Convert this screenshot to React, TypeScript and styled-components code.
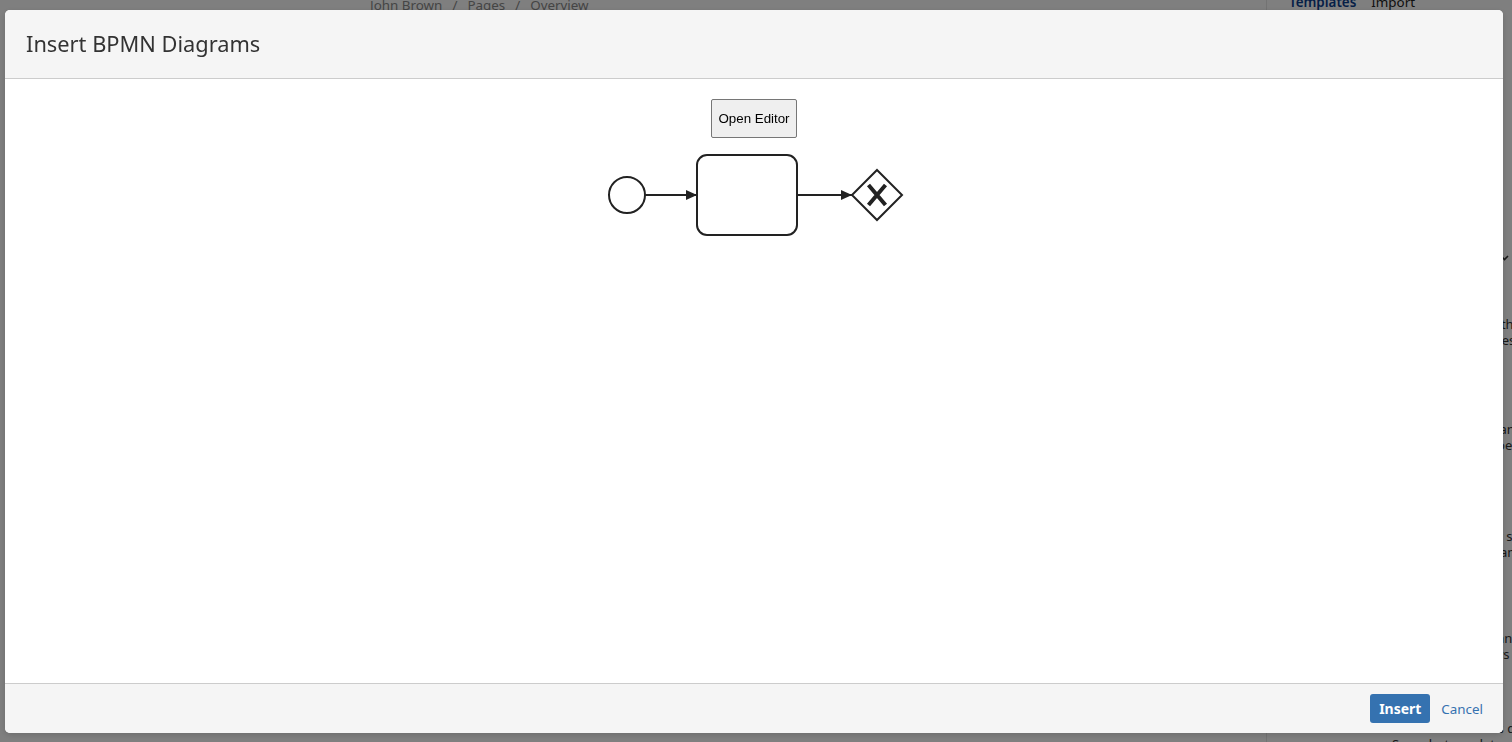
import React from "react";
import styled, { createGlobalStyle } from "styled-components";

const GlobalStyle = createGlobalStyle`
  html, body {
    margin: 0;
    padding: 0;
    height: 100%;
    overflow: hidden;
  }
  body {
    font-family: "Noto Sans", "Open Sans", sans-serif;
    background: #ffffff;
  }
`;

const Page = styled.div`
  display: flex;
  width: 100vw;
  height: 100vh;
  overflow: hidden;
  color: #42526e;
`;

const Main = styled.div`
  flex: 1;
  padding: 0 0 0 370px;
`;

const Breadcrumbs = styled.div`
  display: flex;
  gap: 10px;
  margin-top: -4px;
  font-size: 13.4px;
  color: #8a8a8a;
`;

const Toolbar = styled.div`
  display: flex;
  justify-content: flex-end;
  padding-right: 150px;
  margin-top: -12px;
  font-size: 14px;
  color: #222;
`;

const Sidebar = styled.aside`
  width: 245px;
  border-left: 1px solid #e6e6e6;
  display: flex;
  flex-direction: column;
  overflow: hidden;
`;

const Tabs = styled.div`
  display: flex;
  gap: 15px;
  padding-left: 22px;
  margin-top: -7px;
  height: 18px;
  font-size: 13.4px;
`;

const Tab = styled.span<{ $active?: boolean }>`
  color: ${(p) => (p.$active ? "#0b3f8f" : "#222")};
  font-weight: ${(p) => (p.$active ? 600 : 400)};
`;

const SectionToggle = styled.div`
  display: flex;
  justify-content: flex-end;
  align-items: center;
  height: 10px;
  margin-top: 244px;
  padding-right: 3px;
`;

const SideBlock = styled.div<{ $gap: number }>`
  margin-top: ${(p) => p.$gap}px;
  padding-left: 24px;
  font-size: 13px;
  line-height: 16px;
  white-space: nowrap;
  color: #333;
`;

const SideLine = styled.div<{ $indent: number }>`
  padding-left: ${(p) => p.$indent}px;
  font-size: 13px;
  line-height: 16px;
  white-space: nowrap;
  color: #333;
`;

const Overlay = styled.div`
  position: fixed;
  inset: 0;
  background: rgba(0, 0, 0, 0.5);
`;

const Dialog = styled.div`
  position: fixed;
  left: 5px;
  top: 10px;
  width: 1498px;
  height: 723px;
  border-radius: 5px;
  background: #ffffff;
  display: flex;
  flex-direction: column;
  overflow: hidden;
  box-shadow: 0 2px 6px rgba(0, 0, 0, 0.15);
`;

const Header = styled.header`
  height: 69px;
  flex: none;
  box-sizing: border-box;
  background: #f5f5f5;
  border-bottom: 1px solid #cccccc;
  display: flex;
  align-items: center;
  padding: 0 21px 1px;
`;

const Title = styled.h2`
  margin: 0;
  font-family: "Noto Sans", sans-serif;
  font-weight: 400;
  font-size: 21.8px;
  color: #333333;
`;

const Body = styled.div`
  flex: 1;
  display: flex;
  flex-direction: column;
  align-items: center;
  padding-top: 20px;
  gap: 12px;
`;

const EditorButton = styled.button`
  width: 86px;
  height: 39px;
  padding: 0;
  background: #efefef;
  border: 1px solid #767676;
  border-radius: 2px;
  font-family: "Liberation Sans", Arial, sans-serif;
  font-size: 13.33px;
  color: #000000;
`;

const Footer = styled.footer`
  height: 50px;
  flex: none;
  box-sizing: border-box;
  background: #f5f5f5;
  border-top: 1px solid #cccccc;
  display: flex;
  align-items: center;
  justify-content: flex-end;
  padding: 0 20px 0 0;
  gap: 11px;
`;

const PrimaryButton = styled.button`
  height: 29px;
  width: 60px;
  padding: 0;
  border: none;
  border-radius: 3px;
  background: #3572b0;
  color: #ffffff;
  font-family: "Noto Sans", sans-serif;
  font-weight: 700;
  font-size: 14px;
`;

const LinkButton = styled.a`
  color: #3572b0;
  font-size: 13.4px;
  text-decoration: none;
  cursor: pointer;
`;

const Diagram: React.FC = () => (
  <svg width="306" height="92" viewBox="600 150 306 92">
    <defs>
      <marker
        id="arrow"
        viewBox="0 0 12 10"
        refX="11"
        refY="5"
        markerWidth="12"
        markerHeight="10"
        markerUnits="userSpaceOnUse"
        orient="auto"
      >
        <path d="M0 0 L11 5 L0 10 Z" fill="#222" />
      </marker>
    </defs>
    <circle cx="626" cy="195" r="18" fill="#fff" stroke="#222" strokeWidth="2" />
    <line x1="644" y1="195" x2="696" y2="195" stroke="#222" strokeWidth="2" markerEnd="url(#arrow)" />
    <rect x="696" y="155" width="100" height="80" rx="10" fill="#fff" stroke="#222" strokeWidth="2" />
    <line x1="796" y1="195" x2="851" y2="195" stroke="#222" strokeWidth="2" markerEnd="url(#arrow)" />
    <path d="M876 170 L901 195 L876 220 L851 195 Z" fill="#fff" stroke="#222" strokeWidth="2" />
    <path d="M867.5 185 L884.5 205 M884.5 185 L867.5 205" stroke="#222" strokeWidth="4" strokeLinecap="butt" />
  </svg>
);

export default function App() {
  return (
    <>
      <GlobalStyle />
      <Page>
        <Main>
          <Breadcrumbs>
            <span>John Brown</span>
            <span>/</span>
            <span>Pages</span>
            <span>/</span>
            <span>Overview</span>
          </Breadcrumbs>
          <Toolbar>↔</Toolbar>
        </Main>
        <Sidebar>
          <Tabs>
            <Tab $active>Templates</Tab>
            <Tab>Import</Tab>
          </Tabs>
          <SectionToggle>
            <svg width="9" height="6" viewBox="0 0 9 6">
              <path d="M1 1 L4.5 4.5 L8 1" fill="none" stroke="#333" strokeWidth="1.6" />
            </svg>
          </SectionToggle>
          <SideBlock $gap={55}>
            Draw process models for teams with
            <br />
            and keep them in sync across spaces f
          </SideBlock>
          <SideBlock $gap={73}>
            Collect every diagram in a single panel l
            <br />
            Review the flow and decide who does wh
          </SideBlock>
          <SideBlock $gap={75}>
            Export the diagram as an image or svg fot
            <br />
            Share it with people outside the team n
          </SideBlock>
          <SideBlock $gap={70}>
            Start from a template or from a blank sta
            <br />
            Arrange events, tasks and gateways pos
          </SideBlock>
          <SideBlock $gap={58}>
            Mark each task in the list when it is done and ac
          </SideBlock>
          <SideLine $indent={125}>Snapshots update</SideLine>
        </Sidebar>
      </Page>
      <Overlay />
      <Dialog role="dialog" aria-label="Insert BPMN Diagrams">
        <Header>
          <Title>Insert BPMN Diagrams</Title>
        </Header>
        <Body>
          <EditorButton>Open Editor</EditorButton>
          <Diagram />
        </Body>
        <Footer>
          <PrimaryButton>Insert</PrimaryButton>
          <LinkButton>Cancel</LinkButton>
        </Footer>
      </Dialog>
    </>
  );
}
